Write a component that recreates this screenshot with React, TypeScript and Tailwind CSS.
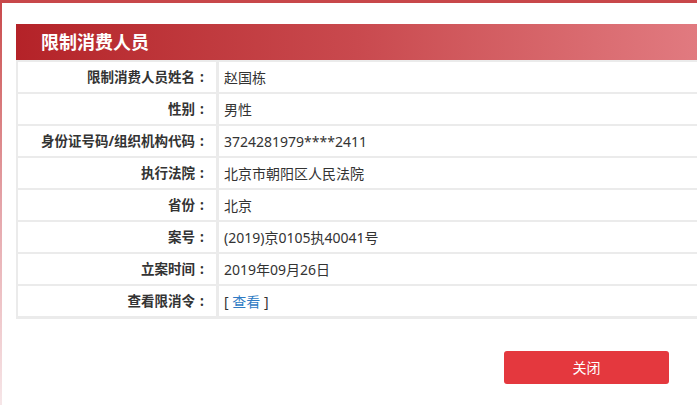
/**
 * Restricted consumer detail dialog
 */

const rows: { label: string; value: React.ReactNode }[] = [
  { label: '限制消费人员姓名', value: '赵国栋' },
  { label: '性别', value: '男性' },
  { label: '身份证号码/组织机构代码', value: '3724281979****2411' },
  { label: '执行法院', value: '北京市朝阳区人民法院' },
  { label: '省份', value: '北京' },
  { label: '案号', value: '(2019)京0105执40041号' },
  { label: '立案时间', value: '2019年09月26日' },
  {
    label: '查看限消令',
    value: (
      <span>
        [ <a className="text-[#2f7bc4] cursor-pointer">查看</a> ]
      </span>
    ),
  },
];

export default function App() {
  return (
    <div
      className="w-[697px] h-[405px] overflow-hidden flex bg-white text-[#333]"
      style={{ fontFamily: '"Noto Sans", "Noto Sans CJK SC", sans-serif' }}
    >
      {/* left edge of the dialog frame */}
      <div className="w-[2px] shrink-0 bg-gradient-to-b from-[#c8474a] via-[#e4a3a8] to-[#f6e6e8]" />

      <div className="flex-1 flex flex-col min-w-0">
        {/* top edge */}
        <div className="h-[3px] bg-[#c8474a] shrink-0" />

        <div className="pt-[21px] pl-[14px] flex flex-col">
          {/* Title bar */}
          <div className="h-[36px] flex items-center pl-[25px] bg-gradient-to-r from-[#b42228] via-[#c9494e] to-[#e17a80]">
            <h3 className="text-[18px] font-bold text-white leading-none">限制消费人员</h3>
          </div>

          {/* Table */}
          <div className="bg-[#ebebeb] p-[2px] pr-0 pb-[3px] flex flex-col gap-[2px]">
            {rows.map((row, idx) => (
              <div key={idx} className="flex h-[30px] gap-[3px]">
                <div className="w-[198px] shrink-0 bg-white flex items-center justify-end pr-[7px] text-[13.5px] font-bold whitespace-nowrap">
                  {row.label}
                  <span className="w-[14px] text-center">:</span>
                </div>
                <div className="flex-1 bg-white flex items-center pl-[5px] text-[14px] whitespace-nowrap">
                  {row.value}
                </div>
              </div>
            ))}
          </div>

          {/* Footer */}
          <div className="flex justify-end pr-[28px] pt-[32px]">
            <button className="w-[165px] h-[33px] rounded-[3px] bg-[#e4383e] text-white text-[14px]">
              关闭
            </button>
          </div>
        </div>
      </div>
    </div>
  );
}
